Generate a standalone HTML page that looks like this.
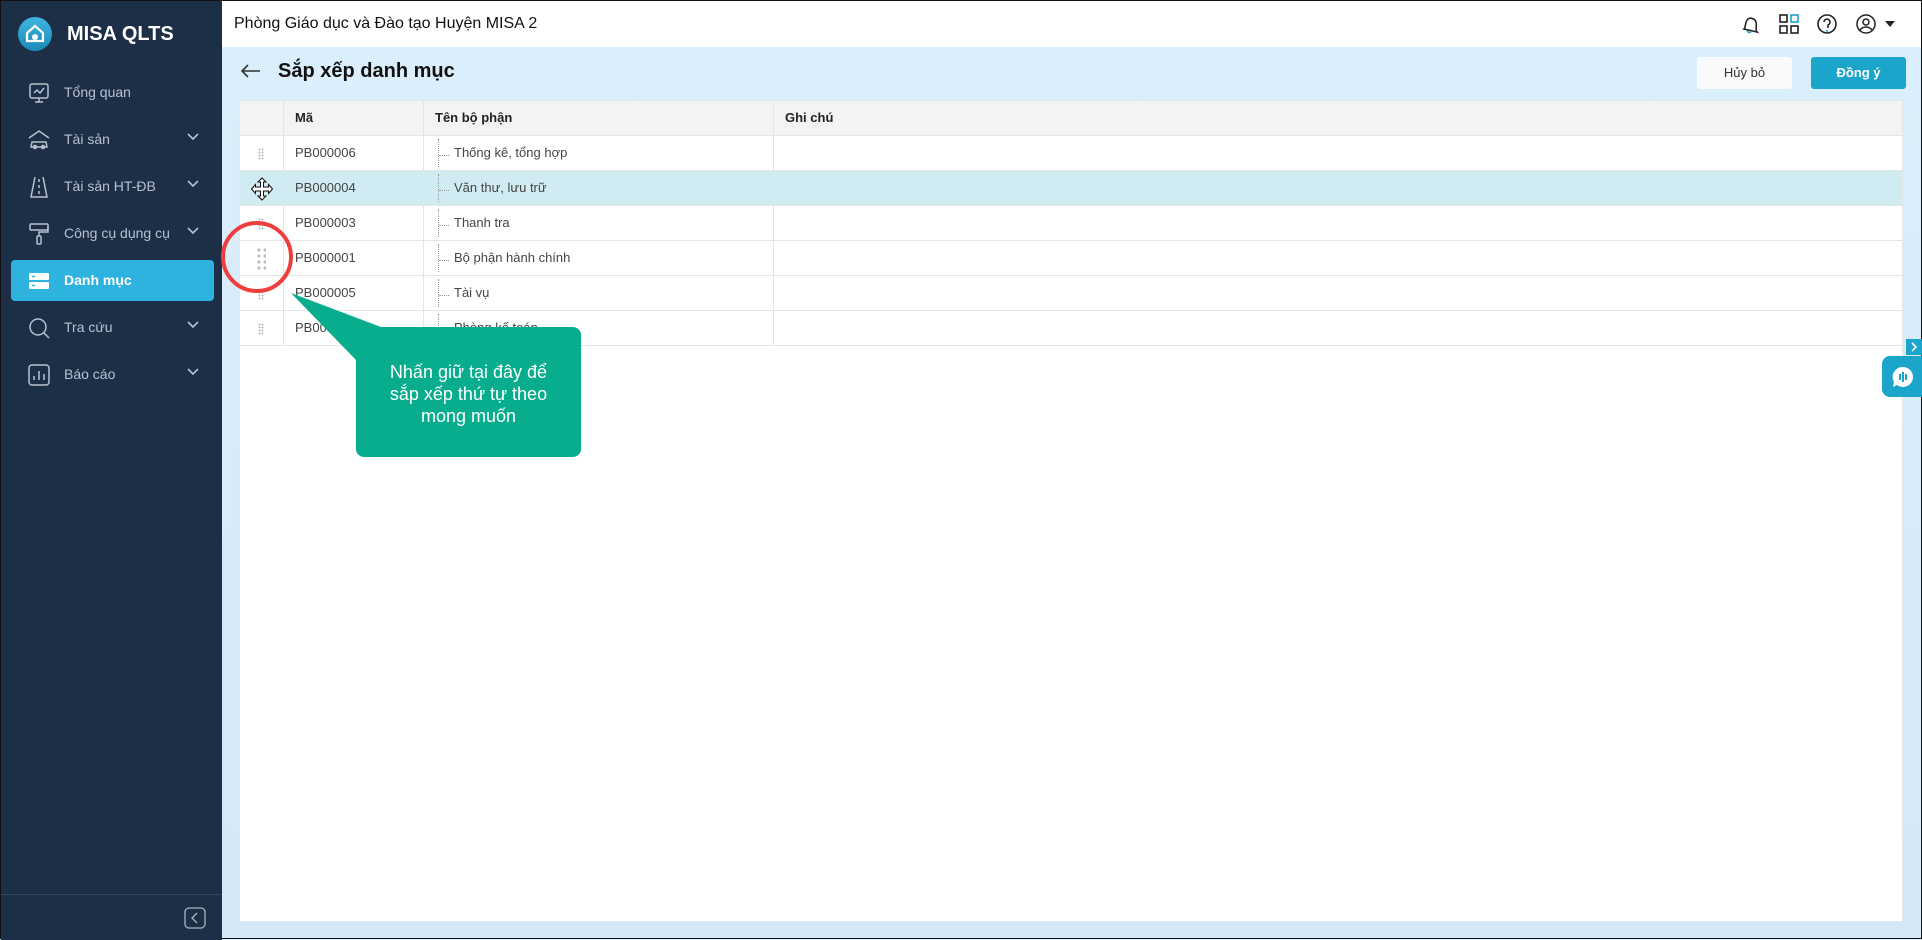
<!DOCTYPE html>
<html><head><meta charset="utf-8"><style>
*{box-sizing:border-box;margin:0;padding:0}
body{width:1922px;height:939px;overflow:hidden;font-family:"Liberation Sans",Arial,sans-serif;position:relative;background:#dcebf7;border:1px solid #111}
.sb{position:absolute;left:0;top:0;width:221px;height:939px;background:#1d2e47}
.logo{position:absolute;left:17px;top:16px;width:34px;height:34px;border-radius:50%;background:linear-gradient(#3fb6e0,#1b89b8)}
.brand{position:absolute;left:66px;top:22px;color:#fff;font-weight:bold;font-size:20px}
.mi{position:absolute;left:10px;width:203px;height:41px;color:#b8c2cf;font-size:14px}
.mi span{position:absolute;left:53px;top:12px}
.mi .ic{position:absolute;left:16px;top:9px}
.mi .ch{position:absolute;left:176px;top:14px}
.mi.act{background:#2eb2de;border-radius:4px;color:#fff;font-weight:bold}
.top{position:absolute;left:221px;top:0;right:0;height:46px;background:#fff}
.ttl{position:absolute;left:12px;top:14px;font-size:16px;color:#111}
.tb{position:absolute;left:238px;top:99px;width:1664px;height:822px;background:#fff;border:1px solid #e6e6e6}
.row{position:absolute;left:0;width:100%;height:35px;border-bottom:1px solid #e5e5e5;font-size:13px;color:#444}
.row div{position:absolute;top:0;height:100%;border-right:1px solid #e5e5e5;line-height:34px}
.c1{left:0;width:44px}.c2{left:44px;width:140px;padding-left:11px}.c3{left:184px;width:350px;padding-left:30px}
.hd{background:#f3f3f3;font-weight:bold;color:#222;top:0}
.dots{position:absolute;left:18px;top:12px;width:6px;height:12px;background-image:radial-gradient(circle,#bbb 0.9px,transparent 1.1px);background-size:3px 3px}
.tree{position:absolute;left:14px;top:3px;height:28px;border-left:1px dotted #999;border-right:none!important}
.tree:after{content:"";position:absolute;left:0;top:16px;width:10px;border-top:1px dotted #999}
.btn{position:absolute;top:56px;height:32px;width:95px;border-radius:3px;font-size:13px;text-align:center;line-height:32px}
</style></head><body>
<div class="sb">
<div class="logo"><svg width="34" height="34" viewBox="0 0 34 34"><path d="M9 16 L17 9 L25 16 V24 H9Z" fill="none" stroke="#fff" stroke-width="2.2"/><circle cx="17" cy="20" r="3" fill="#fff"/></svg></div>
<div class="brand">MISA QLTS</div>
<div class="mi" style="top:71px"><svg class="ic" width="24" height="24" viewBox="0 0 24 24" fill="none" stroke="#b8c2cf" stroke-width="1.5"><rect x="3" y="3" width="18" height="14" rx="2"/><path d="M7 12l3-3 3 3 4-5M12 17v4M8 21h8"/></svg><span>Tổng quan</span></div>
<div class="mi" style="top:118px"><svg class="ic" width="24" height="24" viewBox="0 0 24 24" fill="none" stroke="#b8c2cf" stroke-width="1.5"><path d="M2 10L12 3l10 7M5 14h14l1 5H4z"/><circle cx="8" cy="19" r="1.5"/><circle cx="16" cy="19" r="1.5"/></svg><span>Tài sản</span><svg class="ch" width="12" height="8"><path d="M1 1l5 5 5-5" stroke="#b8c2cf" stroke-width="1.6" fill="none"/></svg></div>
<div class="mi" style="top:165px"><svg class="ic" width="24" height="24" viewBox="0 0 24 24" fill="none" stroke="#b8c2cf" stroke-width="1.5"><path d="M8 2L4 22h16L16 2M12 4v3M12 10v3M12 16v3"/></svg><span>Tài sản HT-ĐB</span><svg class="ch" width="12" height="8"><path d="M1 1l5 5 5-5" stroke="#b8c2cf" stroke-width="1.6" fill="none"/></svg></div>
<div class="mi" style="top:212px"><svg class="ic" width="24" height="24" viewBox="0 0 24 24" fill="none" stroke="#b8c2cf" stroke-width="1.5"><rect x="3" y="2" width="18" height="6" rx="1"/><path d="M21 5v5h-9v4"/><rect x="10" y="14" width="4" height="8" rx="1"/></svg><span>Công cụ dụng cụ</span><svg class="ch" width="12" height="8"><path d="M1 1l5 5 5-5" stroke="#b8c2cf" stroke-width="1.6" fill="none"/></svg></div>
<div class="mi act" style="top:259px"><svg class="ic" width="24" height="24" viewBox="0 0 24 24"><rect x="2" y="4" width="20" height="7" rx="1" fill="#fff"/><rect x="2" y="13" width="20" height="7" rx="1" fill="#fff"/><path d="M5 7.5h3M5 16.5h3" stroke="#2eb2de" stroke-width="1.5"/></svg><span>Danh mục</span></div>
<div class="mi" style="top:306px"><svg class="ic" width="24" height="24" viewBox="0 0 24 24" fill="none" stroke="#b8c2cf" stroke-width="1.5"><circle cx="11" cy="11" r="8"/><path d="M17 17l5 5"/></svg><span>Tra cứu</span><svg class="ch" width="12" height="8"><path d="M1 1l5 5 5-5" stroke="#b8c2cf" stroke-width="1.6" fill="none"/></svg></div>
<div class="mi" style="top:353px"><svg class="ic" width="24" height="24" viewBox="0 0 24 24" fill="none" stroke="#b8c2cf" stroke-width="1.5"><rect x="2" y="2" width="20" height="20" rx="3"/><path d="M7 17v-4M12 17V8M17 17v-6"/></svg><span>Báo cáo</span><svg class="ch" width="12" height="8"><path d="M1 1l5 5 5-5" stroke="#b8c2cf" stroke-width="1.6" fill="none"/></svg></div>
<div style="position:absolute;left:0;top:893px;width:221px;border-top:1px solid #34465f"></div>
<svg style="position:absolute;left:183px;top:906px" width="22" height="22"><rect x="1" y="1" width="20" height="20" rx="4" fill="none" stroke="#aab4c0" stroke-width="1.3"/><path d="M13 6l-5 5 5 5" fill="none" stroke="#aab4c0" stroke-width="1.3"/></svg>
</div>
<div style="position:absolute;left:221px;top:46px;right:0;bottom:0;background:linear-gradient(#dbeefb,#d6e8f6)"></div>
<div class="top"><div class="ttl">Phòng Giáo dục và Đào tạo Huyện MISA 2</div>
<svg style="position:absolute;left:1517px;top:12px" width="22" height="22" viewBox="0 0 22 22" fill="none" stroke="#222" stroke-width="1.6"><path d="M5 16c2-2 1-8 4-10s7 0 8 3-1 8 1 10z"/><path d="M8 18a3 3 0 0 0 4 1" stroke="#1aa3cb"/></svg>
<svg style="position:absolute;left:1556px;top:12px" width="22" height="22" fill="none" stroke-width="1.6"><rect x="2" y="2" width="7" height="7" stroke="#222"/><rect x="13" y="2" width="7" height="7" stroke="#1aa3cb"/><rect x="2" y="13" width="7" height="7" stroke="#222"/><rect x="13" y="13" width="7" height="7" stroke="#222"/></svg>
<svg style="position:absolute;left:1594px;top:12px" width="22" height="22" fill="none" stroke="#222" stroke-width="1.6"><circle cx="11" cy="11" r="9"/><path d="M8 9a3 3 0 1 1 4 3v3" /><path d="M11 17v2" stroke="#1aa3cb"/></svg>
<svg style="position:absolute;left:1633px;top:12px" width="22" height="22" fill="none" stroke="#222" stroke-width="1.5"><circle cx="11" cy="11" r="9"/><circle cx="11" cy="9" r="3"/><path d="M5 17c3-4 9-4 12 0"/></svg>
<svg style="position:absolute;left:1663px;top:20px" width="10" height="6"><path d="M0 0h10L5 6z" fill="#222"/></svg>
</div>
<svg style="position:absolute;left:238px;top:62px" width="22" height="16"><path d="M21 8H3M9 2L3 8l6 6" fill="none" stroke="#333" stroke-width="1.6"/></svg>
<div style="position:absolute;left:277px;top:59px;font-size:20px;font-weight:bold;color:#111">Sắp xếp danh mục</div>
<div class="btn" style="left:1696px;background:#f8fafc;color:#333">Hủy bỏ</div>
<div class="btn" style="left:1810px;background:#1ba5cb;color:#fff;font-weight:bold">Đồng ý</div>
<div class="tb">
<div class="row hd"><div class="c1"></div><div class="c2">Mã</div><div class="c3" style="padding-left:11px">Tên bộ phận</div><div style="left:534px;padding-left:11px;border:none">Ghi chú</div></div>
<div class="row" style="top:35px"><div class="c1"><i class="dots"></i></div><div class="c2">PB000006</div><div class="c3"><i class="tree"></i>Thống kê, tổng hợp</div></div>
<div class="row" style="top:70px;background:#d0ecf2"><div class="c1"><svg style="position:absolute;left:10px;top:6px" width="24" height="24" viewBox="0 0 24 24"><path d="M12 1l4 4h-2.5v5h5V7.5l4 4.5-4 4.5V14h-5v5H16l-4 4-4-4h2.5v-5h-5v2.5l-4-4.5 4-4.5V10h5V5H8z" fill="#fff" stroke="#111" stroke-width="1"/></svg></div><div class="c2">PB000004</div><div class="c3"><i class="tree"></i>Văn thư, lưu trữ</div></div>
<div class="row" style="top:105px"><div class="c1"><i class="dots"></i></div><div class="c2">PB000003</div><div class="c3"><i class="tree"></i>Thanh tra</div></div>
<div class="row" style="top:140px"><div class="c1"><i class="dots" style="left:16px;top:6px;width:10px;height:24px;background-size:6px 6px;background-image:radial-gradient(circle,#bbb 1.4px,transparent 1.7px)"></i></div><div class="c2">PB000001</div><div class="c3"><i class="tree"></i>Bộ phận hành chính</div></div>
<div class="row" style="top:175px"><div class="c1"><i class="dots"></i></div><div class="c2">PB000005</div><div class="c3"><i class="tree"></i>Tài vụ</div></div>
<div class="row" style="top:210px"><div class="c1"><i class="dots"></i></div><div class="c2">PB000002</div><div class="c3"><i class="tree"></i>Phòng kế toán</div></div>
</div>
<div style="position:absolute;left:220px;top:220px;width:72px;height:72px;border:4px solid #ef3e3e;border-radius:50%"></div>
<svg style="position:absolute;left:280px;top:280px" width="120" height="80"><path d="M10 12L100 46L76 80z" fill="#07ad8d"/></svg>
<div style="position:absolute;left:355px;top:326px;width:225px;height:130px;background:#07ad8d;border-radius:8px;color:#fff;font-size:18px;text-align:center;line-height:22px;padding-top:34px">Nhấn giữ tại đây để<br>sắp xếp thứ tự theo<br>mong muốn</div>
<div style="position:absolute;left:1905px;top:338px;width:16px;height:16px;background:#1ba5cb"><svg width="16" height="16"><path d="M6 4l4 4-4 4" stroke="#fff" stroke-width="1.6" fill="none"/></svg></div>
<div style="position:absolute;left:1881px;top:355px;width:41px;height:41px;background:#1ba5cb;border-radius:8px 0 0 8px"><svg style="position:absolute;left:10px;top:10px" width="22" height="22"><path d="M11 1a10 10 0 1 1-6 18l-4 2 1-5A10 10 0 0 1 11 1z" fill="#fff"/><path d="M8 8v6M11 6v10M14 8v6" stroke="#1ba5cb" stroke-width="2"/></svg></div>
</body></html>
